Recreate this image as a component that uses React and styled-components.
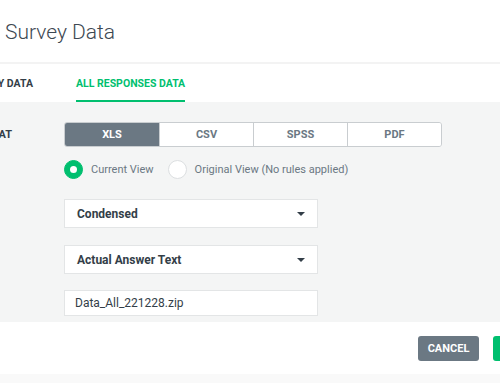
import { createGlobalStyle, styled } from "styled-components";

const GlobalStyle = createGlobalStyle`
    body{
        margin: 0;
        background: #f9f9f9;
        overflow: hidden;
        font-family: Roboto, "Liberation Sans", sans-serif;
    }
`;

const formats = ["XLS", "CSV", "SPSS", "PDF"];

function App(){
    return(
        <>
            <GlobalStyle />
            <Modal>
                <Header>
                    <Title>Survey Data</Title>
                </Header>
                <Tabs>
                    <Tab>SUMMARY DATA</Tab>
                    <Tab $active>ALL RESPONSES DATA</Tab>
                </Tabs>
                <Body>
                    <Label>FORMAT</Label>
                    <Fields>
                        <Segmented>
                            {formats.map((f, i) => (
                                <Segment key={f} $active={i === 0}>{f}</Segment>
                            ))}
                        </Segmented>
                        <RadioRow>
                            <RadioOption>
                                <Radio $checked />
                                Current View
                            </RadioOption>
                            <RadioOption>
                                <Radio />
                                Original View (No rules applied)
                            </RadioOption>
                        </RadioRow>
                        <Select $top={20}>
                            Condensed
                            <Caret />
                        </Select>
                        <Select $top={17}>
                            Actual Answer Text
                            <Caret />
                        </Select>
                        <TextInput>Data_All_221228.zip</TextInput>
                    </Fields>
                </Body>
                <Footer>
                    <Button>CANCEL</Button>
                    <Button $primary>EXPORT</Button>
                </Footer>
            </Modal>
        </>
    )
}

export default App;

const Modal = styled.div`
    width: 720px;
    margin-left: -100px;
    background: #fff;
    box-shadow: 0 1px 1px rgba(0,0,0,0.35), 0 2px 4px rgba(0,0,0,0.25);
`;

const Header = styled.div`
    height: 64px;
    padding-left: 105px;
    box-sizing: border-box;
    border-bottom: 2px solid #f3f3f3;
`;

const Title = styled.h1`
    margin: 0;
    padding-top: 19px;
    font-size: 21px;
    line-height: 26px;
    font-weight: 300;
    color: #3d4852;
`;

const Tabs = styled.div`
    display: grid;
    grid-template-columns: 133px auto 1fr;
    column-gap: 43px;
    height: 38px;
`;

const Tab = styled.div`
    display: flex;
    align-items: center;
    justify-self: ${p => p.$active ? "start" : "end"};
    font-size: 10.5px;
    font-weight: 700;
    color: ${p => p.$active ? "#00bf6f" : "#333e48"};
    border-bottom: 2px solid ${p => p.$active ? "#00bf6f" : "transparent"};
    padding-top: 2px;
`;

const Body = styled.div`
    display: flex;
    background: #f4f5f5;
    padding: 20px 0 6px;
`;

const Label = styled.div`
    width: 164px;
    padding-right: 52px;
    box-sizing: border-box;
    text-align: right;
    font-size: 11px;
    font-weight: 700;
    color: #333e48;
    line-height: 25px;
`;

const Fields = styled.div`
    display: flex;
    flex-direction: column;
    width: 378px;
`;

const Segmented = styled.div`
    display: grid;
    grid-template-columns: repeat(4, 1fr);
    height: 25px;
    border: 1px solid #c9cdd0;
    border-radius: 3px;
    overflow: hidden;
    box-sizing: border-box;
`;

const Segment = styled.div`
    display: flex;
    align-items: center;
    justify-content: center;
    font-size: 11px;
    font-weight: 700;
    background: ${p => p.$active ? "#6b7883" : "#fff"};
    color: ${p => p.$active ? "#fff" : "#6b7883"};
    border-left: 1px solid #c9cdd0;
    &:first-child{
        border-left: none;
    }
`;

const RadioRow = styled.div`
    display: flex;
    gap: 14px;
    margin-top: 13px;
    height: 19px;
`;

const RadioOption = styled.div`
    display: flex;
    align-items: center;
    gap: 8px;
    font-size: 11px;
    color: #6b7883;
`;

const Radio = styled.span`
    width: 19px;
    height: 19px;
    box-sizing: border-box;
    border-radius: 50%;
    background: ${p => p.$checked ? "#00bf6f" : "#fff"};
    border: 1px solid ${p => p.$checked ? "#00bf6f" : "#dcdfe1"};
    display: flex;
    align-items: center;
    justify-content: center;
    &::after{
        content: "";
        width: 7px;
        height: 7px;
        border-radius: 50%;
        background: #fff;
        display: ${p => p.$checked ? "block" : "none"};
    }
`;

const Select = styled.div`
    display: flex;
    align-items: center;
    justify-content: space-between;
    width: 254px;
    height: 29px;
    box-sizing: border-box;
    margin-top: ${p => p.$top}px;
    padding: 0 12px 0 12px;
    background: #fff;
    border: 1px solid #e3e5e6;
    font-size: 12px;
    font-weight: 700;
    color: #333e48;
`;

const Caret = styled.span`
    width: 0;
    height: 0;
    border-left: 4px solid transparent;
    border-right: 4px solid transparent;
    border-top: 4px solid #333e48;
`;

const TextInput = styled.div`
    display: flex;
    align-items: center;
    width: 254px;
    height: 26px;
    box-sizing: border-box;
    margin-top: 16px;
    padding-left: 10px;
    background: #fff;
    border: 1px solid #e3e5e6;
    font-size: 12px;
    color: #333e48;
`;

const Footer = styled.div`
    display: flex;
    gap: 14px;
    height: 52px;
    padding: 14px 0 0 518px;
    box-sizing: border-box;
`;

const Button = styled.div`
    display: flex;
    align-items: center;
    justify-content: center;
    height: 25px;
    padding: 0 ${p => p.$primary ? "15px" : "0"};
    width: ${p => p.$primary ? "auto" : "61px"};
    box-sizing: border-box;
    border-radius: 3px;
    background: ${p => p.$primary ? "#00bf6f" : "#6b7883"};
    color: #fff;
    font-size: 11px;
    font-weight: 700;
`;
